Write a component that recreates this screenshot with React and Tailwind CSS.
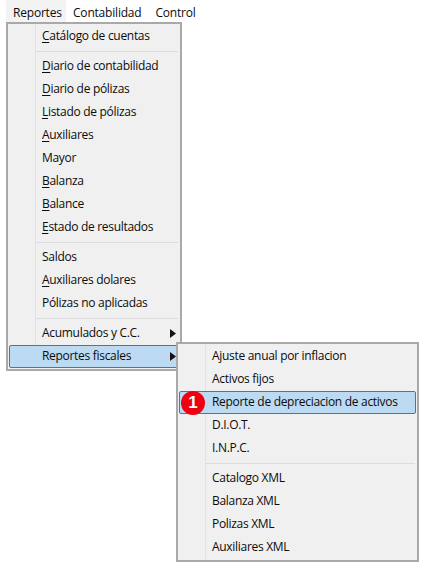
const font = "font-['Open_Sans','Noto_Sans',sans-serif]";

const Arrow = () => (
  <svg width="6" height="9" viewBox="0 0 6 9" className="absolute right-[2px] top-[6px]">
    <path d="M0 0 L6 4.5 L0 9 Z" fill="#1a1010" />
  </svg>
);

const Sep = () => (
  <div className="h-[7px] flex items-center pl-[27px] pr-[1px]">
    <div className="h-px w-full bg-[#dcdcdc]" />
  </div>
);

const Item = ({ u, label, active, arrow }) => (
  <div
    className={`relative h-[23px] flex items-center pl-[32px] text-[12px] tracking-[-0.3px] text-[#0c0c0c] border rounded-[2px] ${
      active ? "bg-[#bcdaf1] border-[#2a80c4]" : "border-transparent"
    }`}
  >
    <span className="relative -top-px whitespace-nowrap">
      {u && <span className="underline underline-offset-2">{u}</span>}
      {label}
    </span>
    {arrow && <Arrow />}
  </div>
);

const Menu = ({ className, children }) => (
  <div className={`bg-[#f0f0f0] border-2 border-[#a9a9a9] p-[1px] ${className}`}>
    <div className="relative">
      <div className="absolute left-[26px] top-0 bottom-0 w-px bg-[#e2e2e2]" />
      <div className="relative">{children}</div>
    </div>
  </div>
);

export default function App() {
  return (
    <div className={`relative w-[427px] h-[568px] bg-white overflow-hidden ${font}`}>
      {/* Menu bar */}
      <div className="flex h-[22px] pl-[6px] text-[12px] tracking-[-0.2px] text-[#0c0c0c]">
        <span className="w-[60px] h-full bg-[#f3f3f3] pl-[7px] pt-[4px]">Reportes</span>
        <span className="ml-[7px] pt-[4px]">Contabilidad</span>
        <span className="ml-[14px] pt-[4px]">Control</span>
      </div>

      {/* Main dropdown */}
      <Menu className="ml-[6px] w-[176px]">
        <Item u="C" label="atálogo de cuentas" />
        <Sep />
        <Item u="D" label="iario de contabilidad" />
        <Item u="D" label="iario de pólizas" />
        <Item u="L" label="istado de pólizas" />
        <Item u="A" label="uxiliares" />
        <Item label="Mayor" />
        <Item u="B" label="alanza" />
        <Item u="B" label="alance" />
        <Item u="E" label="stado de resultados" />
        <Sep />
        <Item label="Saldos" />
        <Item u="A" label="uxiliares dolares" />
        <Item label="Pólizas no aplicadas" />
        <Sep />
        <Item label="Acumulados y C.C." arrow />
        <Item label="Reportes fiscales" active arrow />
      </Menu>

      {/* Submenu */}
      <Menu className="absolute left-[176px] top-[342px] w-[243px]">
        <Item label="Ajuste anual por inflacion" />
        <Item label="Activos fijos" />
        <Item label="Reporte de depreciacion de activos" active />
        <Item label="D.I.O.T." />
        <Item label="I.N.P.C." />
        <Sep />
        <Item label="Catalogo XML" />
        <Item label="Balanza XML" />
        <Item label="Polizas XML" />
        <Item label="Auxiliares XML" />
      </Menu>

      {/* Step badge */}
      <div className="absolute left-[181px] top-[391px] w-[24px] h-[24px] rounded-full bg-[#f00010] flex items-center justify-center text-white text-[17px] font-bold font-['Liberation_Sans',sans-serif]">
        1
      </div>
    </div>
  );
}
